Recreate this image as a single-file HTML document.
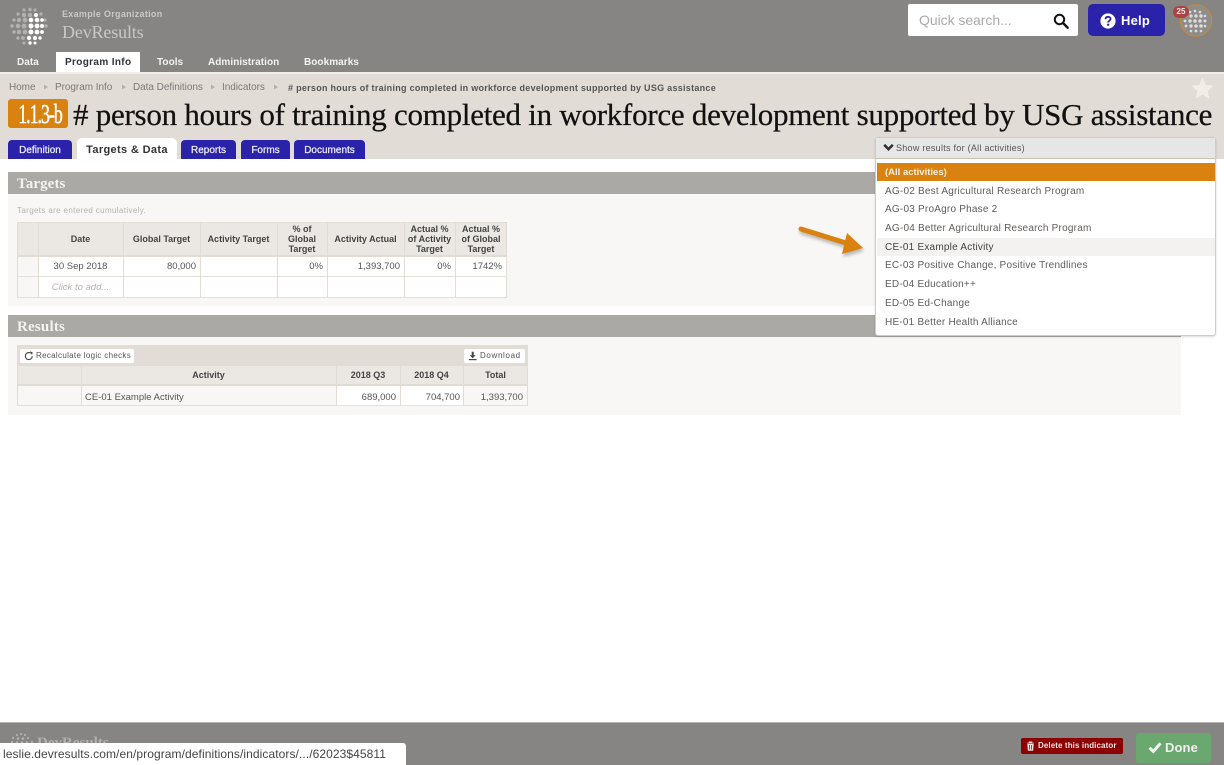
<!DOCTYPE html>
<html><head><meta charset="utf-8"><title>DevResults</title>
<style>
html,body{margin:0;padding:0;background:#fff;width:1224px;height:765px;overflow:hidden}
body{position:relative;font-family:"Liberation Sans",sans-serif;color:#555}
.b,.t{position:absolute}
.t{white-space:nowrap;font-size:9.5px;line-height:12px;letter-spacing:0}
.s{font-family:"Liberation Serif",serif}
.c{text-align:center}.r{text-align:right}
.h{font-weight:bold;color:#444;font-size:9px;line-height:10px;letter-spacing:0}
.tab{position:absolute;top:140px;height:19px;background:#2a22a8;border-radius:4px 4px 0 0;color:#e8e8f4;font-size:10px;line-height:21px;text-align:center;letter-spacing:0;-webkit-text-stroke:.3px #e8e8f4}
.nav{position:absolute;top:56px;color:#f2f2f2;font-size:10px;line-height:13px;font-weight:bold;letter-spacing:.05px;white-space:nowrap}
.cr{color:#7c7a78;font-size:10px;top:82px;letter-spacing:-.05px}
.dd{left:885px;color:#5f5d5b;font-size:10px;letter-spacing:.22px}
svg{position:absolute;overflow:visible}
</style></head><body>

<!-- Header -->
<div class="b" style="left:0;top:0;width:1224px;height:72px;background:#868583"></div>
<div class="b" style="left:0;top:72px;width:1224px;height:2px;background:#f1efec"></div>

<svg style="left:0;top:0" width="60" height="50">
<g fill="#b2b1af" stroke="#b2b1af" stroke-width=".4">
<circle cx="24" cy="10" r="1.5"/><circle cx="30" cy="9.5" r="1.6"/><circle cx="35" cy="10" r="1.5"/>
<circle cx="18" cy="14" r="1.5"/><circle cx="24" cy="15" r="2"/><circle cx="30" cy="15" r="2"/><circle cx="41" cy="14" r="1.5"/>
<circle cx="14" cy="20" r="1.5"/><circle cx="19" cy="20" r="2"/><circle cx="25" cy="20" r="2.2"/><circle cx="45" cy="20" r="1.5"/>
<circle cx="12" cy="26" r="1.6"/><circle cx="18" cy="26" r="2.1"/><circle cx="24" cy="26" r="2.3"/><circle cx="46" cy="26" r="1.6"/>
<circle cx="14" cy="32" r="1.6"/><circle cx="19" cy="32" r="2"/><circle cx="25" cy="32" r="2.2"/>
<circle cx="18" cy="38" r="1.5"/><circle cx="23" cy="38" r="1.8"/><circle cx="24" cy="43" r="1.4"/>
</g>
<g fill="#fff">
<circle cx="36" cy="15" r="2"/>
<circle cx="31" cy="20" r="2.3"/><circle cx="37" cy="20" r="2.3"/><circle cx="42" cy="20" r="1.8"/>
<circle cx="31" cy="26" r="2.5"/><circle cx="37" cy="26" r="2.4"/><circle cx="42" cy="26" r="2"/>
<circle cx="31" cy="32" r="2.5"/><circle cx="37" cy="32" r="2.4"/><circle cx="42" cy="32" r="1.9"/>
<circle cx="29" cy="38" r="2.2"/><circle cx="35" cy="38" r="2.1"/><circle cx="40" cy="38" r="1.7"/>
<circle cx="30" cy="43" r="1.7"/><circle cx="35" cy="43" r="1.5"/>
</g>
</svg>
<div class="t" style="left:62px;top:8px;font-size:9px;font-weight:bold;color:#c9c8c6;letter-spacing:.3px">Example Organization</div>
<div class="t s" style="left:62px;top:22px;font-size:18px;line-height:20px;color:#c9c8c6;letter-spacing:-.15px">DevResults</div>

<div class="nav" style="left:17px">Data</div>
<div class="b" style="left:56px;top:52px;width:84px;height:20px;background:#fff"></div>
<div class="nav" style="left:65px;color:#333;letter-spacing:.35px">Program Info</div>
<div class="nav" style="left:157px">Tools</div>
<div class="nav" style="left:208px">Administration</div>
<div class="nav" style="left:304px">Bookmarks</div>

<!-- Search, help, avatar -->
<div class="b" style="left:908px;top:4px;width:170px;height:32px;background:#fff;border-radius:2px"></div>
<div class="t" style="left:919px;top:12px;font-size:14px;line-height:17px;color:#aaa;letter-spacing:-.05px">Quick search...</div>
<svg style="left:1053px;top:13px" width="16" height="16" viewBox="0 0 16 16"><circle cx="6.5" cy="6.5" r="4.7" fill="none" stroke="#111" stroke-width="2"/><path d="M10 10l4.600 4.600" stroke="#111" stroke-width="2.400" stroke-linecap="round"/></svg>
<div class="b" style="left:1088px;top:4px;width:77px;height:32px;background:#2a22a8;border-radius:5px"></div>
<svg style="left:1100px;top:13px" width="16" height="16" viewBox="0 0 16 16"><circle cx="8" cy="8" r="7.600" fill="#fff"/><path d="M5.500 6.200C5.600 4.600 6.700 3.800 8.100 3.800c1.500 0 2.500.9 2.500 2.100 0 1.900-2.400 1.900-2.400 3.600" fill="none" stroke="#2a22a8" stroke-width="1.800"/><rect x="7.100" y="10.700" width="2.100" height="2" fill="#2a22a8"/></svg>
<div class="t" style="left:1121px;top:13px;font-size:13px;line-height:16px;font-weight:bold;color:#fff;letter-spacing:.2px">Help</div>
<svg style="left:1164px;top:0" width="60" height="40">
<circle cx="32" cy="20.500" r="15.700" fill="#8e8d8b" stroke="#c98a2c" stroke-width="1"/>
<g fill="#dcdbd9"><circle cx="26" cy="12" r="1.300"/><circle cx="31" cy="11" r="1.300"/><circle cx="36" cy="12" r="1.300"/>
<circle cx="22" cy="16" r="1.300"/><circle cx="27" cy="16" r="1.600"/><circle cx="32" cy="16" r="1.700"/><circle cx="37" cy="16" r="1.700"/><circle cx="41" cy="16" r="1.300"/>
<circle cx="21" cy="21" r="1.400"/><circle cx="26" cy="21" r="1.700"/><circle cx="31" cy="21" r="1.800"/><circle cx="36" cy="21" r="1.800"/><circle cx="41" cy="21" r="1.500"/>
<circle cx="22" cy="26" r="1.400"/><circle cx="27" cy="26" r="1.700"/><circle cx="32" cy="26" r="1.800"/><circle cx="37" cy="26" r="1.800"/><circle cx="41" cy="26" r="1.300"/>
<circle cx="27" cy="31" r="1.300"/><circle cx="32" cy="31" r="1.400"/><circle cx="37" cy="31" r="1.300"/></g>
</svg>
<div class="b" style="left:1173px;top:6px;width:16px;height:12px;background:#a94442;border-radius:6px"></div>
<div class="t c" style="left:1173px;top:6px;width:16px;font-size:8px;line-height:12px;font-weight:bold;color:#f4e8e8;letter-spacing:0">25</div>

<!-- Title band -->
<div class="b" style="left:0;top:74px;width:1224px;height:85px;background:#e2dcd6"></div>
<div class="t cr" style="left:9px">Home</div>
<div class="t cr" style="left:55px">Program Info</div>
<div class="t cr" style="left:133px">Data Definitions</div>
<div class="t cr" style="left:222px">Indicators</div>
<div class="t cr" style="left:288px;font-weight:bold;color:#555;font-size:9px;letter-spacing:.28px"># person hours of training completed in workforce development supported by USG assistance</div>
<svg style="left:0;top:81px" width="290" height="14"><g fill="#b5b0aa"><path d="M44 3.500l4 2.500-4 2.500z"/><path d="M122 3.500l4 2.500-4 2.500z"/><path d="M211 3.500l4 2.500-4 2.500z"/><path d="M274 3.500l4 2.500-4 2.500z"/></g></svg>

<div class="b" style="left:8px;top:99px;width:60px;height:29px;background:#d9820f;border-radius:3px"></div>
<div class="t s c" style="left:8px;top:100px;width:60px;font-size:27px;line-height:28px;color:#fff;letter-spacing:-1.500px;transform:scaleX(.66);-webkit-text-stroke:.5px #fff">1.1.3-b</div>
<div class="t s" style="left:73px;top:97px;font-size:31px;line-height:36px;color:#111;letter-spacing:-.26px;-webkit-text-stroke:.25px #111">
# person hours of training completed in workforce development supported by USG assistance</div>
<svg style="left:1191px;top:77px" width="24" height="24" viewBox="0 0 24 24"><path d="M11.500 .5l3.200 7.400 7.900.7-6 5.300 1.800 7.900-6.900-4.200-6.900 4.200 1.800-7.900-6-5.300 7.900-.7z" fill="#f1eeea"/></svg>

<div class="tab" style="left:8px;width:64px">Definition</div>
<div class="b" style="left:77px;top:138px;width:100px;height:21px;background:#fff;border-radius:5px 5px 0 0"></div>
<div class="t c" style="left:77px;top:144px;width:100px;font-size:11px;line-height:13px;font-weight:bold;color:#333;letter-spacing:.35px">Targets &amp; Data</div>
<div class="tab" style="left:181px;width:55px">Reports</div>
<div class="tab" style="left:241px;width:49px">Forms</div>
<div class="tab" style="left:294px;width:71px">Documents</div>

<!-- Targets section -->
<div class="b" style="left:8px;top:172px;width:1173px;height:22px;background:#aaa9a6"></div>
<div class="t s" style="left:17px;top:175px;font-size:15px;line-height:18px;font-weight:bold;color:#f3f3f1;letter-spacing:.1px">Targets</div>
<div class="b" style="left:8px;top:194px;width:1173px;height:112px;background:#f8f7f5"></div>
<div class="t" style="left:17px;top:206px;font-size:8px;line-height:10px;color:#b4b3b1;letter-spacing:.36px">Targets are entered cumulatively.</div>

<div class="b" style="left:17px;top:222px;width:490px;height:34px;background:#ebe8e3"></div>
<div class="b" style="left:38px;top:256px;width:469px;height:41px;background:#fff"></div>
<div class="b" style="left:17px;top:255px;width:490px;height:2px;background:#e2dcd6"></div>
<div class="b" style="left:17px;top:276px;width:490px;height:1px;background:#e6e0da"></div>
<div class="b" style="left:17px;top:297px;width:490px;height:1px;background:#e6e0da"></div>
<div class="b" style="left:17px;top:222px;width:490px;height:1px;background:#e2dcd6"></div>
<div class="b" style="left:17px;top:222px;width:1px;height:75px;background:#e2dcd6"></div>
<div class="b" style="left:38px;top:222px;width:1px;height:75px;background:#e2dcd6"></div>
<div class="b" style="left:123px;top:222px;width:1px;height:75px;background:#e2dcd6"></div>
<div class="b" style="left:200px;top:222px;width:1px;height:75px;background:#e2dcd6"></div>
<div class="b" style="left:277px;top:222px;width:1px;height:75px;background:#e2dcd6"></div>
<div class="b" style="left:327px;top:222px;width:1px;height:75px;background:#e2dcd6"></div>
<div class="b" style="left:404px;top:222px;width:1px;height:75px;background:#e2dcd6"></div>
<div class="b" style="left:455px;top:222px;width:1px;height:75px;background:#e2dcd6"></div>
<div class="b" style="left:506px;top:222px;width:1px;height:75px;background:#e2dcd6"></div>

<div class="t h c" style="left:38px;top:234px;width:85px">Date</div>
<div class="t h c" style="left:123px;top:234px;width:77px">Global Target</div>
<div class="t h c" style="left:200px;top:234px;width:77px">Activity Target</div>
<div class="t h c" style="left:277px;top:224px;width:50px">% of<br>Global<br>Target</div>
<div class="t h c" style="left:327px;top:234px;width:77px">Activity Actual</div>
<div class="t h c" style="left:404px;top:224px;width:51px">Actual %<br>of Activity<br>Target</div>
<div class="t h c" style="left:455px;top:224px;width:52px">Actual %<br>of Global<br>Target</div>

<div class="t c" style="left:38px;top:261px;width:85px">30 Sep 2018</div>
<div class="t r" style="left:123px;top:261px;width:73px">80,000</div>
<div class="t r" style="left:277px;top:261px;width:46px">0%</div>
<div class="t r" style="left:327px;top:261px;width:73px">1,393,700</div>
<div class="t r" style="left:404px;top:261px;width:47px">0%</div>
<div class="t r" style="left:455px;top:261px;width:47px">1742%</div>
<div class="t c" style="left:38px;top:282px;width:85px;font-style:italic;color:#b4b3b1;font-size:9.500px">Click to add...</div>

<!-- Results section -->
<div class="b" style="left:8px;top:315px;width:1173px;height:22px;background:#aaa9a6"></div>
<div class="t s" style="left:17px;top:318px;font-size:15px;line-height:18px;font-weight:bold;color:#f3f3f1;letter-spacing:.2px">Results</div>
<div class="b" style="left:8px;top:337px;width:1173px;height:78px;background:#f8f7f5"></div>

<div class="b" style="left:17px;top:345px;width:511px;height:21px;background:#e2dcd6"></div>
<div class="b" style="left:17px;top:366px;width:511px;height:19px;background:#ebe8e3"></div>
<div class="b" style="left:336px;top:385px;width:127px;height:21px;background:#fff"></div>
<div class="b" style="left:17px;top:384px;width:511px;height:2px;background:#e2dcd6"></div>
<div class="b" style="left:17px;top:405px;width:511px;height:1px;background:#e6e0da"></div>
<div class="b" style="left:17px;top:366px;width:1px;height:40px;background:#e2dcd6"></div>
<div class="b" style="left:81px;top:366px;width:1px;height:40px;background:#e2dcd6"></div>
<div class="b" style="left:336px;top:366px;width:1px;height:40px;background:#e2dcd6"></div>
<div class="b" style="left:400px;top:366px;width:1px;height:40px;background:#e2dcd6"></div>
<div class="b" style="left:463px;top:366px;width:1px;height:40px;background:#e2dcd6"></div>
<div class="b" style="left:527px;top:366px;width:1px;height:40px;background:#e2dcd6"></div>

<div class="b" style="left:20px;top:349px;width:114px;height:14px;background:#fff;border-radius:2px"></div>
<svg style="left:24px;top:351px" width="10" height="10" viewBox="0 0 10 10"><path d="M8.300 5.200A3.500 3.500 0 1 1 6.800 2.200" fill="none" stroke="#444" stroke-width="1.100"/><path d="M6 .3l2.700 1.200-.7 2.600z" fill="#444"/></svg>
<div class="t" style="left:36px;top:351px;font-size:8px;line-height:10px;color:#555;letter-spacing:.31px">Recalculate logic checks</div>
<div class="b" style="left:464px;top:349px;width:61px;height:14px;background:#fff;border-radius:2px"></div>
<svg style="left:468px;top:351px" width="10" height="10" viewBox="0 0 10 10"><path d="M3.700 .8h2v3.400h2L4.700 7.300 1.700 4.200h2z" fill="#444"/><rect x=".8" y="8" width="7.800" height="1.200" fill="#444"/></svg>
<div class="t" style="left:480px;top:351px;font-size:8px;line-height:10px;color:#555;letter-spacing:.65px">Download</div>

<div class="t h c" style="left:81px;top:370px;width:255px">Activity</div>
<div class="t h c" style="left:336px;top:370px;width:64px">2018 Q3</div>
<div class="t h c" style="left:400px;top:370px;width:63px">2018 Q4</div>
<div class="t h c" style="left:463px;top:370px;width:65px">Total</div>
<div class="t" style="left:85px;top:392px;font-size:9.500px">CE-01 Example Activity</div>
<div class="t r" style="left:336px;top:392px;width:60px">689,000</div>
<div class="t r" style="left:400px;top:392px;width:60px">704,700</div>
<div class="t r" style="left:463px;top:392px;width:60px">1,393,700</div>

<!-- Dropdown -->
<div class="b" style="left:875px;top:137px;width:339px;height:197px;background:#fff;border:1px solid #d3cbbd;border-radius:3px;box-shadow:0 1px 2px rgba(0,0,0,.15)"></div>
<div class="b" style="left:876px;top:138px;width:339px;height:20px;background:#e6e6e6;border-bottom:1px solid #c9bfae"></div>
<svg style="left:883px;top:143px" width="11" height="9" viewBox="0 0 11 9"><path d="M1.200 1.800L5.500 6.200 9.800 1.800" fill="none" stroke="#333" stroke-width="2.600"/></svg>
<div class="t" style="left:896px;top:142px;font-size:9px;color:#555;letter-spacing:.27px">Show results for (All activities)</div>
<div class="b" style="left:877px;top:163px;width:338px;height:18px;background:#d9820f"></div>
<div class="t" style="left:885px;top:167px;font-size:9.500px;font-weight:bold;color:#f9efdf;letter-spacing:0">(All activities)</div>
<div class="t dd" style="top:186px">AG-02 Best Agricultural Research Program</div>
<div class="t dd" style="top:204px">AG-03 ProAgro Phase 2</div>
<div class="t dd" style="top:223px">AG-04 Better Agricultural Research Program</div>
<div class="b" style="left:877px;top:238px;width:338px;height:18px;background:#f4f2f0"></div>
<div class="t dd" style="top:242px;color:#444">CE-01 Example Activity</div>
<div class="t dd" style="top:260px">EC-03 Positive Change, Positive Trendlines</div>
<div class="t dd" style="top:279px">ED-04 Education++</div>
<div class="t dd" style="top:298px">ED-05 Ed-Change</div>
<div class="t dd" style="top:317px">HE-01 Better Health Alliance</div>

<!-- Arrow -->
<svg style="left:790px;top:218px" width="85" height="50">
<g transform="translate(1,3)" opacity=".25" style="filter:blur(1.5px)"><path d="M11 11L56 25" stroke="#000" stroke-width="5" stroke-linecap="round"/><path d="M57 15L73 30 52 36z" fill="#000"/></g>
<path d="M11 11L56 25" stroke="#d9820f" stroke-width="5" stroke-linecap="round"/>
<path d="M57 15L73 30 52 36z" fill="#d9820f"/>
</svg>

<!-- Footer -->
<div class="b" style="left:0;top:722px;width:1224px;height:43px;background:#868583;border-top:1px solid #b5b4b2"></div>
<svg style="left:8px;top:731px" width="26" height="14"><g fill="#b2b1af"><circle cx="13" cy="3" r="1.100"/><circle cx="9" cy="4" r="1.100"/><circle cx="17" cy="4" r="1.100"/><circle cx="5" cy="7" r="1.100"/><circle cx="10" cy="7.500" r="1.300"/><circle cx="15" cy="7.500" r="1.300"/><circle cx="20" cy="7" r="1.100"/><circle cx="4" cy="11" r="1.100"/><circle cx="9" cy="11.500" r="1.300"/><circle cx="14" cy="11.500" r="1.300"/><circle cx="19" cy="11.500" r="1.300"/><circle cx="24" cy="11" r="1.100"/></g></svg>
<div class="t s" style="left:37px;top:735px;font-size:15px;line-height:17px;font-weight:bold;color:#b2b1af;letter-spacing:0">DevResults</div>
<div class="b" style="left:0;top:743px;width:406px;height:22px;background:#fff;border-radius:0 3px 0 0"></div>
<div class="t" style="left:3px;top:747px;font-size:12px;line-height:15px;color:#444;letter-spacing:.08px">leslie.devresults.com/en/program/definitions/indicators/.../62023$45811</div>

<div class="b" style="left:1021px;top:738px;width:102px;height:16px;background:#8b0000;border-radius:2px"></div>
<svg style="left:1026px;top:741px" width="9" height="10" viewBox="0 0 9 10"><path d="M.8 2h7.400M3 2V.8h3V2M1.600 3h5.800l-.5 6.500H2.100z" fill="#f1dddd" stroke="#f1dddd" stroke-width=".6"/><path d="M3.500 4v4.500M5.500 4v4.500" stroke="#8b0000" stroke-width=".7"/></svg>
<div class="t" style="left:1038px;top:741px;font-size:8px;line-height:10px;font-weight:bold;color:#f3e3e3;letter-spacing:.1px">Delete this indicator</div>
<div class="b" style="left:1136px;top:733px;width:75px;height:30px;background:#6aa86f;border-radius:3px"></div>
<svg style="left:1148px;top:741px" width="14" height="13" viewBox="0 0 14 13"><path d="M1.500 6.800L5.300 10.500 12.500 2.300" fill="none" stroke="#f3f3f3" stroke-width="3"/></svg>
<div class="t" style="left:1165px;top:740px;font-size:13px;line-height:16px;font-weight:bold;color:#f0f0ec;letter-spacing:.1px">Done</div>

</body></html>
